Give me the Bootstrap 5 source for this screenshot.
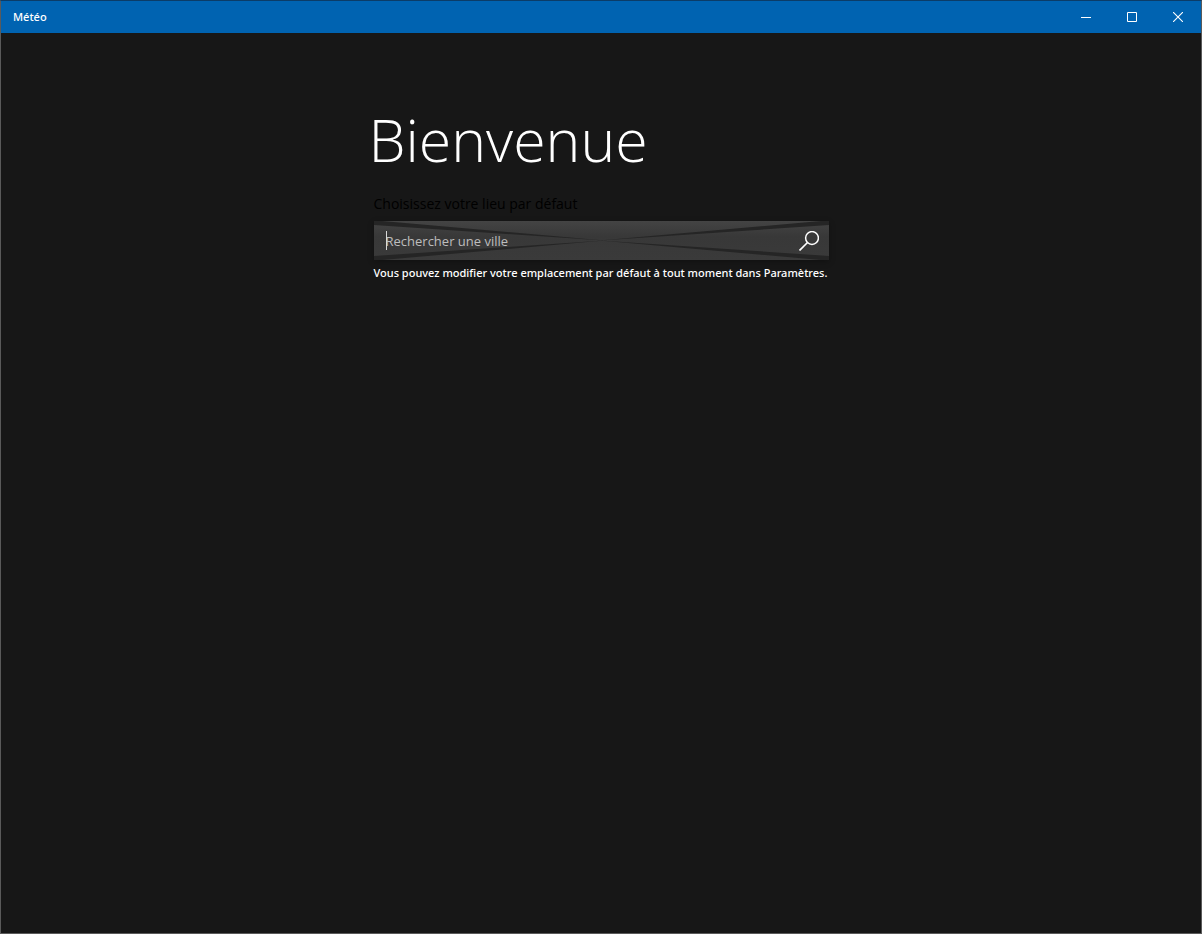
<!DOCTYPE html>
<html lang="fr">
<head>
<meta charset="utf-8">
<meta name="viewport" content="width=device-width, initial-scale=1">
<title>Météo</title>
<link href="https://cdn.jsdelivr.net/npm/bootstrap@5.3.0/dist/css/bootstrap.min.css" rel="stylesheet">
<style>
  body { background: #171717; color: #fff; font-family: "Open Sans", "Noto Sans", sans-serif; }
  .app-window { border: 1px solid #5a5a5a; border-top-color: #0b3c68; }
  .titlebar, .hint { font-family: "Noto Sans", "Open Sans", sans-serif; font-size: 11px; font-weight: 500; }
  .titlebar { background: #0063b1; height: 32px; }
  .caption-btn { width: 46px; height: 32px; color: #fff; }
  .caption-btn:hover { background: #1a73b9; }
  .welcome { width: 455px; max-width: 100%; padding-top: 64px; }
  .welcome-title { font-weight: 300; font-size: 59px; line-height: 84px; margin: 0 0 0 -5px; }
  .place-label { color: #000; font-size: 14px; line-height: 20px; margin-top: 13px; }
  .search-box { height: 39px; margin-top: 7px; background: linear-gradient(#444, #383838 40%, #3a3a3a); box-shadow: 0 2px 6px #0004; }
  .search-rays { inset: 0; }
  .search-input { color: #fff; font-size: 13px; padding: 0 0 0 12px; line-height: 20px; outline: 0; }
  .search-input::placeholder { color: #bdbdbd; opacity: 1; }
  .caret { left: 12px; top: 10px; width: 1px; height: 19px; background: #d8d8d8; }
  .search-btn { width: 40px; color: #fff; }
  .hint { line-height: 16px; margin-top: 5px; }
</style>
</head>
<body>
<div class="app-window min-vh-100 d-flex flex-column">
  <header class="titlebar d-flex align-items-center">
    <span class="me-auto ps-2 ms-1">Météo</span>
    <button type="button" class="caption-btn btn border-0 rounded-0 p-0 d-flex align-items-center justify-content-center" aria-label="Réduire">
      <svg width="10" height="10" viewBox="0 0 10 10" stroke="currentColor" fill="none"><path d="M0 5.5H10"/></svg>
    </button>
    <button type="button" class="caption-btn btn border-0 rounded-0 p-0 d-flex align-items-center justify-content-center" aria-label="Agrandir">
      <svg width="10" height="10" viewBox="0 0 10 10" stroke="currentColor" fill="none"><path d="M.5 .5H9.500V9.500H.5Z"/></svg>
    </button>
    <button type="button" class="caption-btn btn border-0 rounded-0 p-0 d-flex align-items-center justify-content-center" aria-label="Fermer">
      <svg width="10" height="10" viewBox="0 0 10 10" stroke="currentColor" stroke-width="1.1" fill="none"><path d="M0 0L10 10M10 0L0 10"/></svg>
    </button>
  </header>
  <main class="flex-grow-1 d-flex justify-content-center">
    <form class="welcome d-flex flex-column">
      <h1 class="welcome-title">Bienvenue</h1>
      <label class="place-label" for="city">Choisissez votre lieu par défaut</label>
      <div class="search-box position-relative d-flex">
        <svg class="search-rays position-absolute w-100 h-100" viewBox="0 0 455 39" preserveAspectRatio="none" fill="#252525" aria-hidden="true">
          <path d="M0 0H8L230 19.500L0 4Z"/><path d="M0 35L230 19.500L8 39H0Z"/>
          <path d="M455 0H447L226 19.500L455 4Z"/><path d="M455 35L226 19.500L447 39H455Z"/>
        </svg>
        <input id="city" type="text" class="search-input position-relative flex-grow-1 border-0 bg-transparent" placeholder="Rechercher une ville">
        <span class="caret position-absolute"></span>
        <button type="submit" class="search-btn btn position-relative border-0 rounded-0 p-0 d-flex align-items-center justify-content-center" aria-label="Rechercher">
          <svg width="20" height="20" viewBox="0 0 20 20" stroke="currentColor" fill="none"><circle cx="13" cy="7" r="6.400" stroke-width="1.500"/><path d="M8.500 11.500L.5 19.500" stroke-width="1.700"/></svg>
        </button>
      </div>
      <p class="hint mb-0 text-nowrap">Vous pouvez modifier votre emplacement par défaut à tout moment dans Paramètres.</p>
    </form>
  </main>
</div>
<script src="https://cdn.jsdelivr.net/npm/bootstrap@5.3.0/dist/js/bootstrap.bundle.min.js"></script>
</body>
</html>
